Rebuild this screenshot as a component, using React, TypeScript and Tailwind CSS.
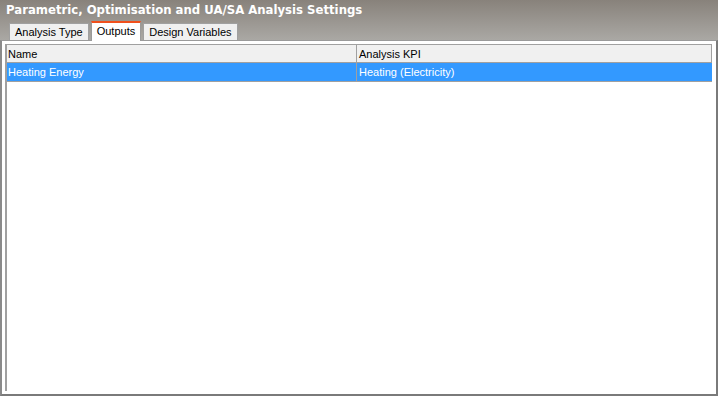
import React from 'react'

const tabs = ['Analysis Type', 'Outputs', 'Design Variables']

const App: React.FC = () => {
    return (
        <div className="w-[718px] h-[396px] flex flex-col font-['Liberation_Sans',Arial,sans-serif] text-[11px] text-black">
            <div className="bg-[linear-gradient(to_bottom,#88827b,#aaa8a4)]">
                <div className="h-[21px] pl-[6px] pt-[1px] text-white font-bold text-[11.7px] font-['DejaVu_Sans',sans-serif] leading-[18px]">
                    Parametric, Optimisation and UA/SA Analysis Settings
                </div>
                <div className="h-[19px] flex items-end pl-[9px]">
                    {tabs.map((t) =>
                        t === 'Outputs' ? (
                            <div key={t} className="h-[20px] mx-[2px] px-[5px] bg-white border-t-2 border-t-[#f0501c] border-x border-x-[#9a9a9a] leading-[17px] relative top-[1px] z-10">
                                {t}
                            </div>
                        ) : (
                            <div key={t} className="h-[17px] px-[5px] bg-[#f0f0f0] border border-b-0 border-[#a0a0a0] leading-[16px]">
                                {t}
                            </div>
                        )
                    )}
                </div>
            </div>
            <div className="flex-1 bg-white border-t border-[#9a9a9a] border-l-2 border-l-[#8a8a8a] border-r-2 border-r-[#7a7a7a] border-b-2 border-b-[#7a7a7a] pt-[3px] pl-[3px] pr-[4px] pb-[3px] flex">
                <div className="flex-1 border-l-2 border-l-[#a0a0a0] flex flex-col">
                    <div className="flex h-[19px] bg-[#f0f0f0] border border-[#a0a0a0] border-l-0">
                        <div className="w-[350px] pl-[1px] border-r border-[#a0a0a0] leading-[18px]">Name</div>
                        <div className="flex-1 pl-[2px] leading-[18px]">Analysis KPI</div>
                    </div>
                    <div className="flex h-[19px] bg-[#3399ff] text-white border-b border-[#a0a0a0]">
                        <div className="w-[350px] pl-[1px] border-r border-[#a0a0a0] leading-[18px]">Heating Energy</div>
                        <div className="flex-1 pl-[2px] leading-[18px]">Heating (Electricity)</div>
                    </div>
                </div>
            </div>
        </div>
    )
}

export default App
